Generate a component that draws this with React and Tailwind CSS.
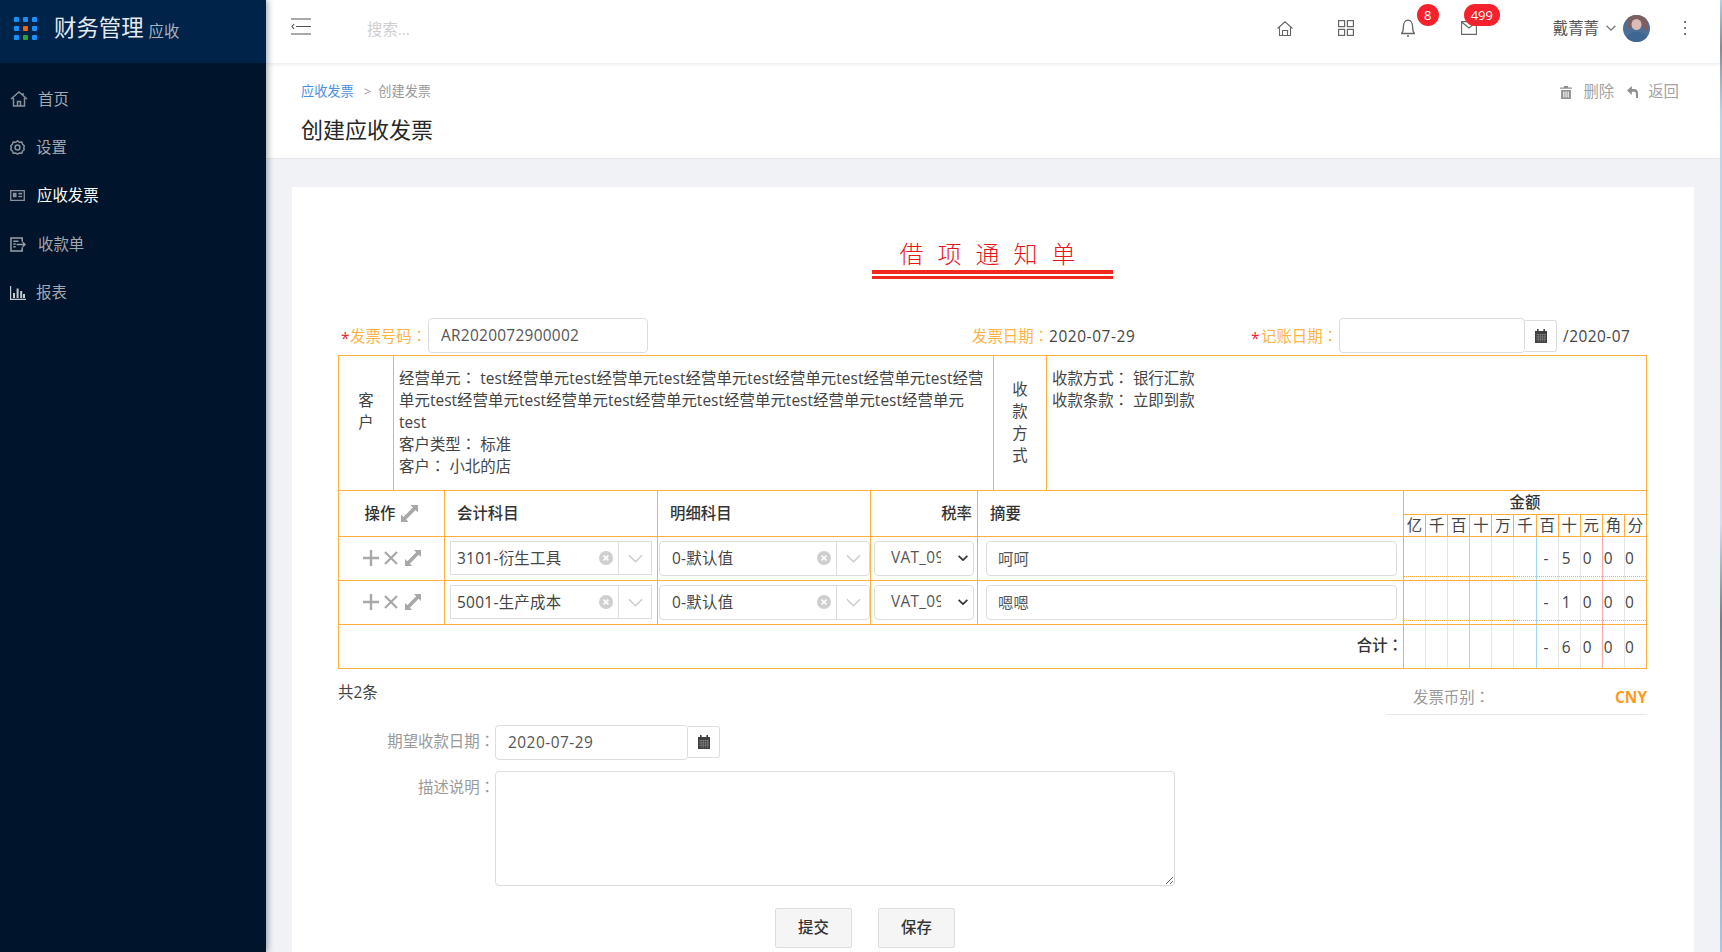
import React from "react";

const font = "font-['Open_Sans','Noto_Sans_CJK_SC',sans-serif]";
const or = "border-[#ffb03a]";

function Colon() {
  return <span className="font-['Noto_Sans_CJK_TC',sans-serif] leading-none">：</span>;
}
function Expand({ className = "" }) {
  return (
    <svg viewBox="0 0 18 18" className={className} fill="#a8a8a8">
      <path d="M10 0H18V8L15.4 5.4L5.4 15.4L8 18H0V10L2.6 12.6L12.6 2.6Z" />
    </svg>
  );
}
function Plus() {
  return (
    <svg viewBox="0 0 16 16" className="w-[16px] h-[16px]" stroke="#a8a8a8" strokeWidth="2.4" fill="none">
      <path d="M8 0V16M0 8H16" />
    </svg>
  );
}
function Cross() {
  return (
    <svg viewBox="0 0 14 14" className="w-[14px] h-[14px]" stroke="#a8a8a8" strokeWidth="2.2" fill="none">
      <path d="M1 1L13 13M13 1L1 13" />
    </svg>
  );
}
function Clear() {
  return (
    <svg viewBox="0 0 14 14" className="w-[14px] h-[14px] shrink-0">
      <circle cx="7" cy="7" r="7" fill="#cfcfcf" />
      <path d="M4.6 4.6L9.4 9.4M9.4 4.6L4.6 9.4" stroke="#fff" strokeWidth="1.8" />
    </svg>
  );
}
function Chev({ className = "", color = "#cccccc", w = 1.6 }) {
  return (
    <svg viewBox="0 0 16 9" className={className} fill="none" stroke={color} strokeWidth={w}>
      <path d="M1 1L8 8L15 1" />
    </svg>
  );
}
function Calendar() {
  return (
    <svg viewBox="0 0 12 14" className="w-[12px] h-[14px]" fill="#3f3f3f">
      <path d="M2 0H3.6V2H8.4V0H10V2H12V14H0V2H2Z" />
      <path d="M1 5.6H11M1 7.9H11M1 10.2H11M3.2 4.8V13.2M5.4 4.8V13.2M7.6 4.8V13.2M9.8 4.8V13.2" stroke="#9a9a9a" strokeWidth="0.5" />
    </svg>
  );
}

const navIcons = [
  <svg key="h" viewBox="0 0 18 16" className="w-[18px] h-[16px]" fill="none" stroke="#8b919a" strokeWidth="1.5">
    <path d="M1 8L9 1L17 8M3.5 7V15H14.5V7M7.5 15V10.5H10.5V15M13 2V4.5" />
  </svg>,
  <svg key="s" viewBox="0 0 16 16" className="w-[15px] h-[15px]" fill="none" stroke="#8b919a" strokeWidth="1.6">
    <path d="M8 1L10 2.4L12.6 2.2L13.4 4.6L15.2 6.2L14.6 8.6L15.2 10.2L13.4 11.8L12.6 14L10 13.8L8 15L6 13.8L3.4 14L2.6 11.8L0.8 10.2L1.4 8L0.8 6.2L2.6 4.6L3.4 2.2L6 2.4Z" />
    <circle cx="8" cy="8" r="2.6" />
  </svg>,
  <svg key="i" viewBox="0 0 16 14" className="w-[15px] h-[13px]" fill="#8b919a">
    <path d="M0 1H16V13H0ZM1.4 2.4V11.6H14.6V2.4Z" fillRule="evenodd" />
    <path d="M3 4H7V9H3ZM9 4H13V6H9ZM9 7.4H13V9H9Z" />
  </svg>,
  <svg key="r" viewBox="0 0 17 16" className="w-[16px] h-[15px]" fill="none" stroke="#9aa0a8" strokeWidth="1.6">
    <path d="M13 5V1H1V15H13V11M3.5 4.5H9M3.5 7.5H6M3.5 10.5H6" />
    <path d="M7 8H16M13.5 5.6L16 8L13.5 10.4" />
  </svg>,
  <svg key="b" viewBox="0 0 16 14" className="w-[16px] h-[14px]" fill="#c6cacf">
    <path d="M0 0H1.2V12.8H16V14H0Z" />
    <path d="M3 7H5V12H3ZM6.6 2.5H8.6V12H6.6ZM10.2 5H12.2V12H10.2ZM13 8H15V12H13Z" />
  </svg>,
];

const nav = [
  { t: "首页", g: "gap-[10px]" },
  { t: "设置", g: "gap-[8px] pl-[1px]" },
  { t: "应收发票", g: "gap-[9px] pl-[1px]", a: true },
  { t: "收款单", g: "gap-[10px] pl-[1px]" },
  { t: "报表", g: "gap-[8px]" },
];

const dots = ["bg-[#1890ff]", "bg-[#1890ff]", "bg-[#1890ff]", "bg-[#1890ff]", "bg-[#fa6400]", "bg-[#1890ff]", "bg-[#1890ff]", "bg-[#2ba52b]", "bg-[#1890ff]"];

function Sidebar() {
  return (
    <aside className="relative z-20 w-[266px] shrink-0 bg-[#00142b] shadow-[2px_0_6px_rgba(0,21,41,0.35)]">
      <div className="h-[63px] bg-[#00234a] flex items-center pl-[14px]">
        <div className="grid grid-cols-3 gap-[4px] w-[23px] mb-[6px]">
          {dots.map((c, i) => (
            <span key={i} className={`w-[5px] h-[5px] rounded-[1px] ${c}`} />
          ))}
        </div>
        <span className="ml-[17px] mb-[6px] text-[22.4px] leading-none text-[#e6eaee]">财务管理</span>
        <span className="ml-[5px] text-[15.4px] leading-none text-[#aab2bd]">应收</span>
      </div>
      <nav className="pt-[12px]">
        {nav.map((n, i) => (
          <div key={n.t} className={`h-[48.4px] flex items-center pl-[10px] ${n.g} text-[15.4px] ${n.a ? "text-white" : "text-[#a3a8af]"}`}>
            <span className="w-[18px] flex items-center justify-start">{navIcons[i]}</span>
            <span>{n.t}</span>
          </div>
        ))}
      </nav>
    </aside>
  );
}

function Topbar() {
  return (
    <header className="relative z-10 h-[63px] shrink-0 bg-white flex items-center pb-[5px] shadow-[0_1px_4px_rgba(0,21,41,0.1)] text-[#555]">
      <svg viewBox="0 0 20 17" className="ml-[25px] w-[20px] h-[17px] mb-[6px]" fill="none" stroke="#555" strokeWidth="1.2">
        <path d="M0 1H20M5 8.5H20M0 16H20M3 6L1 8.5L3 11" />
      </svg>
      <span className="ml-[56px] mt-[1px] text-[15.4px] text-[#cfcfcf]">搜索...</span>
      <div className="ml-auto flex items-center pr-[33px] mb-[2px]">
        <svg viewBox="0 0 16 15" className="w-[16px] h-[15px]" fill="none" stroke="#666" strokeWidth="1.1">
          <path d="M0.5 7.5L8 0.8L15.5 7.5M2.5 6.5V14.5H13.5V6.5M5.5 14.5V9.5H10.5V14.5" />
        </svg>
        <svg viewBox="0 0 16 16" className="ml-[45px] w-[16px] h-[16px]" fill="none" stroke="#666" strokeWidth="1.2">
          <rect x="0.6" y="0.6" width="6" height="6" />
          <rect x="9.4" y="0.6" width="6" height="6" />
          <rect x="0.6" y="9.4" width="6" height="6" />
          <rect x="9.4" y="9.4" width="6" height="6" />
        </svg>
        <div className="relative ml-[47px] w-[14px] h-[18px]">
          <svg viewBox="0 0 14 18" className="w-[14px] h-[18px]" fill="none" stroke="#666" strokeWidth="1.3">
            <path d="M0.5 14.5C2 13 2.4 11 2.4 8C2.4 4 4.4 1.2 7 1.2C9.6 1.2 11.6 4 11.6 8C11.6 11 12 13 13.5 14.5ZM6 17H8" />
          </svg>
          <span className="absolute left-[16px] top-[-15px] w-[22px] h-[22px] rounded-full bg-[#f5222d] text-white text-[13px] leading-[22px] text-center">8</span>
        </div>
        <div className="relative ml-[46px] w-[16px] h-[14px]">
          <svg viewBox="0 0 16 14" className="w-[16px] h-[14px]" fill="none" stroke="#666" strokeWidth="1.1">
            <path d="M0.6 0.6H15.4V13.4H0.6ZM0.6 1L8 7L15.4 1" />
          </svg>
          <span className="absolute left-[3px] top-[-17px] w-[36px] h-[22px] rounded-full bg-[#f5222d] text-white text-[13px] leading-[22px] text-center">499</span>
        </div>
        <span className="ml-[76px] mt-[1px] text-[15.4px] leading-none text-[#555]">戴菁菁</span>
        <Chev className="ml-[7px] w-[10px] h-[6px]" color="#777" w={2} />
        <svg viewBox="0 0 27 27" className="ml-[7px] w-[27px] h-[27px] rounded-full">
          <rect width="27" height="27" fill="#4a7098" />
          <path d="M5 0H24V15C22 17 20 12 19 10L9 9C8 12 7 15 5 14Z" fill="#7d5f60" />
          <ellipse cx="13.5" cy="9.5" rx="5" ry="5.5" fill="#dcbcb8" />
          <path d="M2 27C4 19 9 17 14 17C19 17 24 19 26 27Z" fill="#3e6692" />
        </svg>
        <svg viewBox="0 0 4 14" className="ml-[33px] w-[4px] h-[14px]" fill="#777">
          <rect x="1" y="0" width="2" height="2" />
          <rect x="1" y="6" width="2" height="2" />
          <rect x="1" y="12" width="2" height="2" />
        </svg>
      </div>
    </header>
  );
}

function PageHead() {
  return (
    <section className="relative h-[96px] shrink-0 bg-white border-b border-[#e4e6ea] pl-[35px] pr-[41px] pt-[18px]">
      <div className="flex items-center justify-between h-[20px]">
        <div className="flex items-center text-[13.2px] leading-[20px] text-[#999]">
          <span className="text-[#4a90e2]">应收发票</span>
          <span className="ml-[10px] mr-[7px]">&gt;</span>
          <span>创建发票</span>
        </div>
        <div className="flex items-center text-[15.4px] text-[#a3a3a3] mt-[2px]">
          <svg viewBox="0 0 11 12" className="w-[12px] h-[13px]" fill="#8f8f8f">
            <path d="M3.5 0H7.5V1.4H11V2.6H0V1.4H3.5ZM1 3.6H10V12H1ZM3 5V10.6H4V5ZM5 5V10.6H6V5ZM7 5V10.6H8V5Z" fillRule="evenodd" />
          </svg>
          <span className="ml-[11px]">删除</span>
          <svg viewBox="0 0 11 12" className="ml-[13px] w-[11px] h-[12px]" fill="#8f8f8f">
            <path d="M0 4.5L4.8 0V3H7C9.8 3 11 5 11 7.5V12H9V8C9 6.2 8.2 5.7 6.8 5.7H4.8V9Z" />
          </svg>
          <span className="ml-[10px]">返回</span>
        </div>
      </div>
      <h1 className="mt-[12px] text-[22px] leading-[32px] font-normal text-[#262626]">创建应收发票</h1>
    </section>
  );
}

const lbl = "text-[15.4px] text-[#ffb347] whitespace-nowrap mt-[2px]";
const star = "text-[15.4px] text-[#f5222d] whitespace-nowrap leading-none mt-[6px]";
const inputBox = "border border-[#dddddd] rounded-[4px] bg-white text-[15.4px] text-[#555] outline-none";

function FormRow() {
  return (
    <div className="flex items-center h-[35px] mt-[39px] text-[15.4px] text-[#444]">
      <span className={`${star} ml-[3px] w-[9px]`}>*</span>
      <span className={`${lbl} w-[78px]`}>发票号码<Colon /></span>
      <input readOnly value="AR2020072900002" className={`${inputBox} w-[220px] h-[35px] px-[12px] tracking-[0.3px]`} />
      <span className={`${lbl} ml-[324px] w-[77px]`}>发票日期<Colon /></span>
      <span className="w-[85px] mt-[2px] whitespace-nowrap tracking-[0.6px]">2020-07-29</span>
      <span className={`${star} ml-[117px] w-[10px]`}>*</span>
      <span className={`${lbl} w-[78px]`}>记账日期<Colon /></span>
      <input readOnly className={`${inputBox} w-[186px] h-[35px] px-[12px]`} />
      <span className="w-[32px] h-[32px] border border-[#dddddd] border-l-0 rounded-r-[3px] flex items-center justify-center">
        <Calendar />
      </span>
      <span className="ml-[6px] mt-[2px] whitespace-nowrap tracking-[0.5px]">/2020-07</span>
    </div>
  );
}

function InfoTable() {
  return (
    <table className={`mt-[2px] w-[1309px] table-fixed border ${or} text-[15.4px] leading-[22px] text-[#444]`}>
      <colgroup>
        <col className="w-[55px]" />
        <col className="w-[600px]" />
        <col className="w-[53px]" />
        <col />
      </colgroup>
      <tbody>
        <tr className="h-[135px]">
          <td className={`border ${or} text-center align-middle pb-[22px]`}>
            客<br />户
          </td>
          <td className={`border ${or} align-top px-[5px] pt-[12px] whitespace-nowrap tracking-[0.06px]`}>
            经营单元<Colon /> test经营单元test经营单元test经营单元test经营单元test经营单元test经营
            <br />
            单元test经营单元test经营单元test经营单元test经营单元test经营单元test经营单元
            <br />
            test
            <br />
            客户类型<Colon /> 标准
            <br />
            客户<Colon /> 小北的店
          </td>
          <td className={`border ${or} text-center align-middle`}>
            收<br />款<br />方<br />式
          </td>
          <td className={`border ${or} align-top px-[5px] pt-[12px]`}>
            收款方式<Colon /> 银行汇款
            <br />
            收款条款<Colon /> 立即到款
          </td>
        </tr>
      </tbody>
    </table>
  );
}

const units = ["亿", "千", "百", "十", "万", "千", "百", "十", "元", "角", "分"];
const lines = [
  "border-r-[#e6e6e6]", "border-r-[#e6e6e6]", "border-r-[#9ed8f5]", "border-r-[#e6e6e6]", "border-r-[#e6e6e6]", "border-r-[#9ed8f5]",
  "border-r-[#e6e6e6]", "border-r-[#e6e6e6]", "border-r-[#f5a9a9]", "border-r-[#e6e6e6]", "border-r-[#ffb03a]",
];
const pads = ["pr-0", "pr-0", "pr-0", "pr-0", "pr-0", "pr-0", "pr-[2px]", "pr-[6px]", "pr-[8px]", "pr-[10px]", "pr-[12px]"];
const inner = "border-[#ffb03a]";

function AmountCells({ digits, dotted, top = "pt-[2px]" }) {
  return units.map((_, i) => (
    <td key={i} className={`relative border-r ${lines[i]} border-y ${inner} pb-0 pl-0 ${top} text-center ${pads[i]} text-[15.4px] text-[#444] tracking-[0.3px]`}>
      {digits[i] || ""}
      {dotted && <span className="absolute inset-x-0 bottom-[3px] border-b border-dotted border-[#ffb03a]" />}
    </td>
  ));
}

function Pick({ text, rounded, w, pad, clearGap }) {
  return (
    <div className={`h-[34px] flex items-center border border-[#dddddd] bg-white ${rounded ? "rounded-[4px]" : ""} ${w}`}>
      <span className={`flex-1 ${pad} pt-[2px] text-[15.4px] text-[#444] whitespace-nowrap tracking-[0.3px]`}>{text}</span>
      <Clear />
      <span className={`${clearGap} h-full border-r border-[#dddddd]`} />
      <span className="w-[32px] flex justify-center">
        <Chev className="w-[15px] h-[9px]" />
      </span>
    </div>
  );
}

function Row({ code, summary, digits }) {
  return (
    <tr className="h-[44px]">
      <td className={`border ${or} p-0`}>
        <div className="flex items-center pl-[24px] gap-[5px]">
          <Plus />
          <Cross />
          <Expand className="ml-[2px] w-[16px] h-[16px]" />
        </div>
      </td>
      <td className={`border ${or} pl-[5px] p-0`}>
        <Pick text={code} w="w-[202px] h-[33px]" pad="pl-[6px]" clearGap="w-[6px]" />
      </td>
      <td className={`border ${or} pl-[1px] p-0`}>
        <Pick text="0-默认值" rounded w="w-[211px] h-[35px]" pad="pl-[12px]" clearGap="w-[6px]" />
      </td>
      <td className={`border ${or} pl-[3px] p-0`}>
        <div className="w-[100px] h-[35px] flex items-center border border-[#dddddd] rounded-[4px] pl-[16px] text-[15.4px] text-[#555] bg-white">
          <span className="w-[50px] shrink-0 overflow-hidden whitespace-nowrap tracking-[0.3px]">VAT_09%</span>
          <Chev className="ml-[17px] w-[10px] h-[6px]" color="#333" w={2.6} />
        </div>
      </td>
      <td className={`border ${or} pl-[8px] p-0`}>
        <input readOnly value={summary} className={`${inputBox} w-[411px] h-[35px] px-[11px]`} />
      </td>
      <AmountCells digits={digits} dotted />
    </tr>
  );
}

function LinesTable() {
  const th = `border ${or} font-medium text-[#333] text-[15.4px]`;
  return (
    <table className={`w-[1309px] table-fixed border ${or} border-t-0 text-[#444]`}>
      <colgroup>
        <col className="w-[106px]" />
        <col className="w-[213px]" />
        <col className="w-[213px]" />
        <col className="w-[107px]" />
        <col className="w-[426px]" />
        {units.map((_, i) => (
          <col key={i} className="w-[22.1px]" />
        ))}
      </colgroup>
      <thead>
        <tr className="h-[23px]">
          <th rowSpan={2} className={`${th} border-t-0`}>
            <div className="flex items-center justify-center gap-[6px]">
              操作 <Expand className="w-[17px] h-[17px]" />
            </div>
          </th>
          <th rowSpan={2} className={`${th} border-t-0 text-left pl-[12px]`}>会计科目</th>
          <th rowSpan={2} className={`${th} border-t-0 text-left pl-[12px]`}>明细科目</th>
          <th rowSpan={2} className={`${th} border-t-0 text-right pr-[5px]`}>税率</th>
          <th rowSpan={2} className={`${th} border-t-0 text-left pl-[12px]`}>摘要</th>
          <th colSpan={11} className={`${th} border-t-0 p-0 leading-none`}>金额</th>
        </tr>
        <tr className="h-[22px]">
          {units.map((u, i) => (
            <th key={i} className={`border ${or} pt-[2px] pb-0 px-0 font-normal text-[15.4px] leading-none text-[#444]`}>{u}</th>
          ))}
        </tr>
      </thead>
      <tbody>
        <Row code="3101-衍生工具" summary="呵呵" digits={["", "", "", "", "", "", "-", "5", "0", "0", "0"]} />
        <Row code="5001-生产成本" summary="嗯嗯" digits={["", "", "", "", "", "", "-", "1", "0", "0", "0"]} />
        <tr className="h-[44px]">
          <td colSpan={5} className={`border ${or} text-right pr-0 text-[15.4px] font-medium text-[#333]`}>合计<Colon /></td>
          <AmountCells digits={["", "", "", "", "", "", "-", "6", "0", "0", "0"]} top="pt-[3px]" />
        </tr>
      </tbody>
    </table>
  );
}

function Bottom() {
  const label = "w-[157px] shrink-0 text-right text-[15.4px] text-[#999] whitespace-nowrap";
  return (
    <div className="text-[15.4px] text-[#444]">
      <div className="flex justify-between">
        <span className="mt-[13px] leading-[22px]">共2条</span>
        <div className="mt-[14px] w-[261px] h-[32px] pl-[27px] flex items-center justify-between border-b border-[#e8e8e8]">
          <span className="text-[#999]">发票币别<Colon /></span>
          <span className="text-[#ff9a1f] font-bold">CNY</span>
        </div>
      </div>
      <div className="flex items-center mt-[10px]">
        <span className={label}>期望收款日期<Colon /></span>
        <input readOnly value="2020-07-29" className={`${inputBox} w-[193px] h-[35px] px-[12px] tracking-[0.5px]`} />
        <span className="w-[32px] h-[32px] border border-[#dddddd] border-l-0 rounded-r-[3px] flex items-center justify-center">
          <Calendar />
        </span>
      </div>
      <div className="flex items-start mt-[11px]">
        <span className={`${label} pt-[5px]`}>描述说明<Colon /></span>
        <textarea readOnly className={`${inputBox} w-[680px] h-[115px]`} />
      </div>
      <div className="flex gap-[26px] pl-[437px] mt-[22px]">
        <button className="w-[77px] h-[40px] bg-[#f5f5f5] border border-[#dddddd] rounded-[2px] font-medium text-[#333]">提交</button>
        <button className="w-[77px] h-[40px] bg-[#f5f5f5] border border-[#dddddd] rounded-[2px] font-medium text-[#333]">保存</button>
      </div>
    </div>
  );
}

export default function App() {
  return (
    <div className={`flex w-[1722px] h-[952px] overflow-hidden bg-[#f0f2f5] ${font}`}>
      <Sidebar />
      <main className="flex-1 min-w-0 flex flex-col">
        <Topbar />
        <PageHead />
        <div className="flex-1 min-h-0 pl-[26px] pr-[26px] pt-[28px]">
          <div className="h-full bg-white pl-[46px] pr-[47px] pt-[52px]">
            <div className="flex flex-col items-center">
              <h2 className="text-[24px] leading-[30px] font-light tracking-[14px] pl-[4px] text-[#e61717]">借项通知单</h2>
              <div className="mt-[1px] w-[241px] h-[9px] border-t-[4px] border-b-[3px] border-[#f0281e]" />
            </div>
            <FormRow />
            <InfoTable />
            <LinesTable />
            <Bottom />
          </div>
        </div>
      </main>
      <div className="w-[2px] shrink-0 bg-[linear-gradient(180deg,#b8d4ec_0%,#8a8f99_5%,#b8d4ec_12%,#cfe0f0_55%,#6f7f92_65%,#a9c8e6_100%)]" />
    </div>
  );
}
